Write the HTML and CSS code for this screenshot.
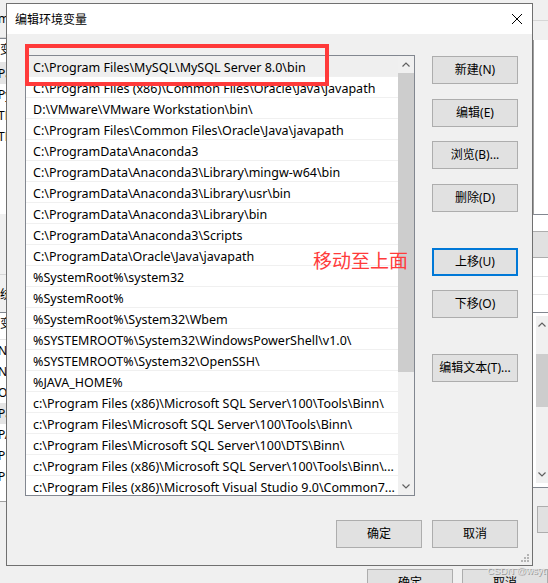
FILE: index.html
```html
<!DOCTYPE html>
<html lang="zh-CN">
<head>
<meta charset="utf-8">
<title>编辑环境变量</title>
<link rel="stylesheet" href="styles.css">
</head>
<body>
<div class="desktop">
  <div class="bg-left">
    <div class="bl-top">m</div>
    <div class="bl-list bl-user">
      <div class="bl-head">变量</div>
      <div class="bl-row bl-sel">Path</div>
      <div class="bl-row">Python</div>
      <div class="bl-row">TEMP</div>
      <div class="bl-row">TMP</div>
    </div>
    <div class="bl-label">系统变量</div>
    <div class="bl-list bl-sys">
      <div class="bl-head">变量</div>
      <div class="bl-row">NUMBER</div>
      <div class="bl-row">NVM</div>
      <div class="bl-row">OS</div>
      <div class="bl-row bl-sel">Path</div>
      <div class="bl-row">PATHEXT</div>
      <div class="bl-row">PROCESSOR</div>
      <div class="bl-row">PROCESSOR</div>
    </div>
  </div>

  <div class="bg-right">
    <div class="br-top"></div>
    <div class="br-panel"></div>
    <div class="br-mid">
      <div class="br-btn"></div>
    </div>
    <div class="br-list">
      <div class="br-scroll">
        <div class="br-arrow">
          <svg width="8" height="5" viewBox="0 0 8 5"><path d="M0.5 4.5 L4 1 L7.5 4.5" fill="none" stroke="#606060" stroke-width="1.2"/></svg>
        </div>
        <div class="br-track"><div class="br-thumb"></div></div>
        <div class="br-arrow">
          <svg width="8" height="5" viewBox="0 0 8 5"><path d="M0.5 0.5 L4 4 L7.5 0.5" fill="none" stroke="#606060" stroke-width="1.2"/></svg>
        </div>
      </div>
    </div>
    <div class="br-btn2"></div>
  </div>

  <div class="bg-bottom">
    <div class="bgb-btn">确定</div>
    <div class="bgb-btn">取消</div>
  </div>

  <div class="dialog">
    <div class="titlebar">
      <span class="title">编辑环境变量</span>
      <svg class="close" width="10" height="10" viewBox="0 0 10 10"><path d="M0 0 L10 10 M10 0 L0 10" stroke="#000" stroke-width="1"/></svg>
    </div>
    <div class="body">
      <div class="main">
        <div class="listbox">
          <div class="rows">
            <div class="row sel">C:\Program Files\MySQL\MySQL Server 8.0\bin</div>
            <div class="row">C:\Program Files (x86)\Common Files\Oracle\Java\javapath</div>
            <div class="row">D:\VMware\VMware Workstation\bin\</div>
            <div class="row">C:\Program Files\Common Files\Oracle\Java\javapath</div>
            <div class="row">C:\ProgramData\Anaconda3</div>
            <div class="row">C:\ProgramData\Anaconda3\Library\mingw-w64\bin</div>
            <div class="row">C:\ProgramData\Anaconda3\Library\usr\bin</div>
            <div class="row">C:\ProgramData\Anaconda3\Library\bin</div>
            <div class="row">C:\ProgramData\Anaconda3\Scripts</div>
            <div class="row">C:\ProgramData\Oracle\Java\javapath</div>
            <div class="row">%SystemRoot%\system32</div>
            <div class="row">%SystemRoot%</div>
            <div class="row">%SystemRoot%\System32\Wbem</div>
            <div class="row">%SYSTEMROOT%\System32\WindowsPowerShell\v1.0\</div>
            <div class="row">%SYSTEMROOT%\System32\OpenSSH\</div>
            <div class="row">%JAVA_HOME%</div>
            <div class="row">c:\Program Files (x86)\Microsoft SQL Server\100\Tools\Binn\</div>
            <div class="row">c:\Program Files\Microsoft SQL Server\100\Tools\Binn\</div>
            <div class="row">c:\Program Files\Microsoft SQL Server\100\DTS\Binn\</div>
            <div class="row">c:\Program Files (x86)\Microsoft SQL Server\100\Tools\Binn\...</div>
            <div class="row">c:\Program Files (x86)\Microsoft Visual Studio 9.0\Common7...</div>
          </div>
          <div class="vscroll">
            <div class="sb-btn">
              <svg width="8" height="5" viewBox="0 0 8 5"><path d="M0.5 4.5 L4 1 L7.5 4.5" fill="none" stroke="#606060" stroke-width="1.2"/></svg>
            </div>
            <div class="sb-track"><div class="sb-thumb"></div></div>
            <div class="sb-btn">
              <svg width="8" height="5" viewBox="0 0 8 5"><path d="M0.5 0.5 L4 4 L7.5 0.5" fill="none" stroke="#606060" stroke-width="1.2"/></svg>
            </div>
          </div>
        </div>
        <div class="side">
          <div class="btn">新建(N)</div>
          <div class="btn">编辑(E)</div>
          <div class="btn">浏览(B)...</div>
          <div class="btn">删除(D)</div>
          <div class="btn focus sep">上移(U)</div>
          <div class="btn">下移(O)</div>
          <div class="btn sep">编辑文本(T)...</div>
        </div>
      </div>
      <div class="footer">
        <div class="btn">确定</div>
        <div class="btn">取消</div>
      </div>
    </div>
    <svg class="grip" width="8" height="8" viewBox="0 0 8 8">
      <rect x="6" y="0" width="2" height="2" fill="#b4b4b4"/>
      <rect x="3" y="3" width="2" height="2" fill="#b4b4b4"/>
      <rect x="6" y="3" width="2" height="2" fill="#b4b4b4"/>
      <rect x="0" y="6" width="2" height="2" fill="#b4b4b4"/>
      <rect x="3" y="6" width="2" height="2" fill="#b4b4b4"/>
      <rect x="6" y="6" width="2" height="2" fill="#b4b4b4"/>
    </svg>
  </div>

  <div class="annot-box"></div>
  <div class="annot-text">移动至上面</div>
  <div class="watermark">CSDN @wsyt</div>
</div>
</body>
</html>
```

FILE: styles.css
```css
* { box-sizing: border-box; }

body {
  margin: 0;
  background: #f0f0f0;
  font-family: "Noto Sans", "Noto Sans CJK SC", sans-serif;
  font-size: 12px;
  color: #000;
}

.desktop {
  position: relative;
  width: 548px;
  height: 583px;
  overflow: hidden;
  background: #f0f0f0;
}

/* ---------- background window fragments ---------- */
.bg-left {
  position: absolute;
  left: -60px;
  top: 0;
  width: 66px;
  height: 583px;
  display: flex;
  flex-direction: column;
  overflow: hidden;
}
.bl-top {
  height: 38px;
  padding-left: 58px;
  padding-top: 12px;
  line-height: 14px;
  border-bottom: 1px solid #d6d6d6;
  flex: none;
}
.bl-list {
  background: #fff;
  border-top: 1px solid #828790;
  flex: none;
}
.bl-user { height: 176px; }
.bl-head {
  height: 24px;
  line-height: 22px;
  padding-left: 60px;
  border-bottom: 1px solid #e5e5e5;
  white-space: nowrap;
  overflow: hidden;
}
.bl-row {
  height: 21px;
  line-height: 21px;
  padding-left: 58px;
  white-space: nowrap;
  overflow: hidden;
}
.bl-sel { background: #e5e5e5; }
.bl-label {
  flex: none;
  margin-top: 60px;
  height: 38px;
  padding-left: 48px;
  padding-top: 12px;
  line-height: 16px;
  border-top: 1px solid #d6d6d6;
  white-space: nowrap;
  overflow: hidden;
}
.bl-sys {
  height: 190px;
  border-bottom: 1px solid #a0a0a0;
}
.bl-sys .bl-head { height: 27px; }

.bg-right {
  position: absolute;
  left: 533px;
  top: 0;
  width: 15px;
  height: 583px;
  display: flex;
  flex-direction: column;
}
.br-top {
  flex: none;
  height: 40px;
  background: linear-gradient(#f0f0f0 0 20px, #d6d6d6 20px 21px, #f0f0f0 21px);
}
.br-panel {
  flex: none;
  height: 175px;
  background: #fff;
  border-left: 1px solid #a0a0a0;
  border-bottom: 1px solid #828790;
}
.br-mid {
  flex: none;
  height: 98px;
  padding-top: 16px;
  border-bottom: 1px solid #828790;
  background: linear-gradient(#fff 0 61px, #e5e5e5 61px 62px, #fff 62px 79px, #e5e5e5 79px 80px, #fff 80px);
}
.br-btn {
  height: 27px;
  background: #e1e1e1;
  border-top: 1px solid #adadad;
  border-bottom: 1px solid #adadad;
}
.br-list {
  flex: none;
  height: 175px;
  background: #fff;
  padding: 3px 0 4px 3px;
  border-bottom: 1px solid #828790;
}
.br-scroll {
  height: 100%;
  background: #f0f0f0;
  display: flex;
  flex-direction: column;
}
.br-arrow {
  height: 17px;
  display: flex;
  align-items: center;
  justify-content: center;
}
.br-track { flex: 1; padding-top: 21px; }
.br-thumb { height: 53px; background: #cdcdcd; }
.br-btn2 {
  flex: none;
  height: 27px;
  margin-top: 18px;
  margin-left: 4px;
  background: #e1e1e1;
  border: 1px solid #adadad;
  border-right: 0;
}

.bg-bottom {
  position: absolute;
  left: 367px;
  top: 569px;
  display: flex;
  gap: 9px;
}
.bgb-btn {
  width: 86px;
  height: 28px;
  border: 1px solid #adadad;
  background: #e1e1e1;
  text-align: center;
  line-height: 26px;
  font-size: 12px;
}

/* ---------- dialog ---------- */
.dialog {
  position: absolute;
  left: 6px;
  top: 3px;
  width: 527px;
  height: 563px;
  border: 1px solid #707070;
  background: #f0f0f0;
  display: flex;
  flex-direction: column;
}

.titlebar {
  height: 30px;
  background: #fff;
  display: flex;
  align-items: center;
  padding-left: 8px;
  flex: none;
}
.title {
  font-family: "Noto Sans CJK SC", sans-serif;
  font-size: 12px;
  line-height: 14px;
}
.close {
  margin-left: auto;
  margin-right: 10px;
}

.body {
  flex: 1;
  padding: 21px 14px 0 18px;
  display: flex;
  flex-direction: column;
}

.main {
  display: flex;
  gap: 17px;
}

.listbox {
  width: 390px;
  height: 441px;
  border: 1px solid #828790;
  background: #fff;
  display: flex;
}
.rows {
  flex: 1;
  overflow: hidden;
}
.row {
  height: 21px;
  line-height: 21px;
  padding-top: 1px;
  padding-left: 7px;
  border-bottom: 1px solid #f0f0f0;
  white-space: nowrap;
  overflow: hidden;
  font-size: 12.5px;
}
.row.sel { background: #efefef; }

.vscroll {
  width: 16px;
  background: #f0f0f0;
  display: flex;
  flex-direction: column;
}
.sb-btn {
  height: 17px;
  display: flex;
  align-items: center;
  justify-content: center;
  flex: none;
}
.sb-track { flex: 1; }
.sb-thumb {
  height: 299px;
  background: #cdcdcd;
}

.side {
  width: 86px;
  padding-top: 1px;
  display: flex;
  flex-direction: column;
  gap: 14.5px;
}
.btn {
  height: 28px;
  border: 1px solid #adadad;
  background: #e1e1e1;
  text-align: center;
  line-height: 26px;
  font-size: 12px;
  white-space: nowrap;
}
.btn.focus {
  border: 2px solid #0078d7;
  line-height: 24px;
}
.btn.sep { margin-top: 21.5px; }

.footer {
  display: flex;
  justify-content: flex-end;
  gap: 10px;
  margin-top: 24px;
}
.footer .btn { width: 86px; }

.grip {
  position: absolute;
  right: 3px;
  bottom: 3px;
}

/* ---------- annotations ---------- */
.annot-box {
  position: absolute;
  left: 25px;
  top: 44px;
  width: 304px;
  height: 42px;
  border: 4px solid #ff3a3a;
}
.annot-text {
  position: absolute;
  left: 313px;
  top: 250px;
  font-family: "Noto Sans CJK SC", sans-serif;
  font-size: 19px;
  line-height: 19px;
  color: #ff3b3b;
}
.watermark {
  position: absolute;
  left: 487px;
  top: 565px;
  font-family: "Liberation Sans", sans-serif;
  font-size: 9.5px;
  line-height: 11px;
  white-space: nowrap;
  color: #e6e6e6;
  text-shadow: 1px 1px 0 #9a9a9a;
}
```
